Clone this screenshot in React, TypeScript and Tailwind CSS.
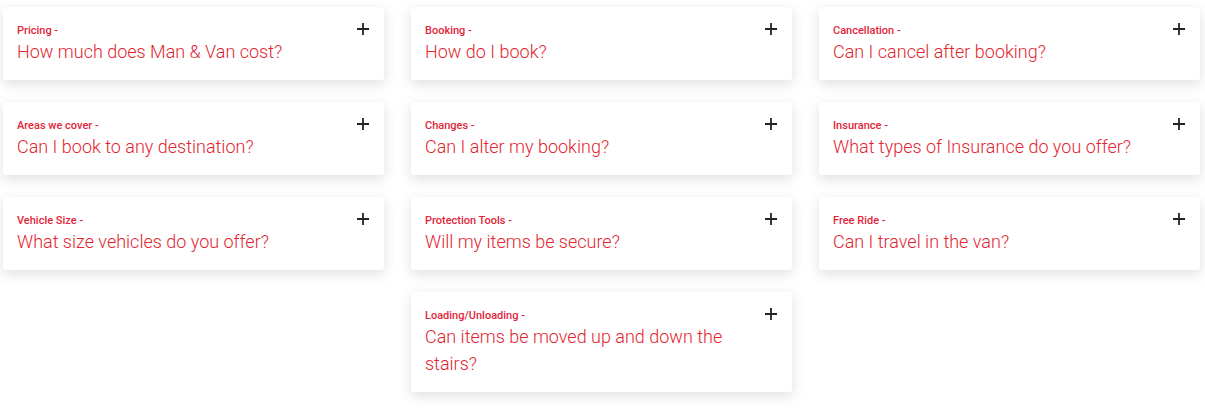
const faqs = [
  { tag: "Pricing", q: "How much does Man & Van cost?" },
  { tag: "Booking", q: "How do I book?" },
  { tag: "Cancellation", q: "Can I cancel after booking?" },
  { tag: "Areas we cover", q: "Can I book to any destination?" },
  { tag: "Changes", q: "Can I alter my booking?" },
  { tag: "Insurance", q: "What types of Insurance do you offer?" },
  { tag: "Vehicle Size", q: "What size vehicles do you offer?" },
  { tag: "Protection Tools", q: "Will my items be secure?" },
  { tag: "Free Ride", q: "Can I travel in the van?" },
  { tag: "Loading/Unloading", q: "Can items be moved up and down the stairs?" },
];

function Plus() {
  return (
    <svg width="12" height="12" viewBox="0 0 12 12" className="shrink-0">
      <path d="M6 0v12M0 6h12" stroke="#222" strokeWidth="1.8" />
    </svg>
  );
}

export default function App() {
  return (
    <div
      className="min-h-[411px] bg-white pl-[3px] pt-[7px]"
      style={{ fontFamily: "Roboto, 'Liberation Sans', sans-serif" }}
    >
      <div className="grid grid-cols-[381px_381px_381px] gap-x-[27px] gap-y-[22px] items-start">
        {faqs.map((f, i) => (
          <div
            key={f.tag}
            className={`bg-white rounded-[3px] shadow-[0_4px_14px_rgba(0,0,0,0.13)] pl-[14px] pr-[15px] pt-[15px] pb-[15px] flex justify-between gap-[20px] ${
              i === 9 ? "col-start-2" : ""
            }`}
          >
            <div className="flex-1">
              <div className="text-[11px] leading-[16px] font-medium text-[#e1253a] pt-[1px]">
                {f.tag} -
              </div>
              <div className="text-[18px] leading-[27px] font-light text-[#e3242e] -mt-[1px]">
                {f.q}
              </div>
            </div>
            <div className="pt-[1px]">
              <Plus />
            </div>
          </div>
        ))}
      </div>
    </div>
  );
}
